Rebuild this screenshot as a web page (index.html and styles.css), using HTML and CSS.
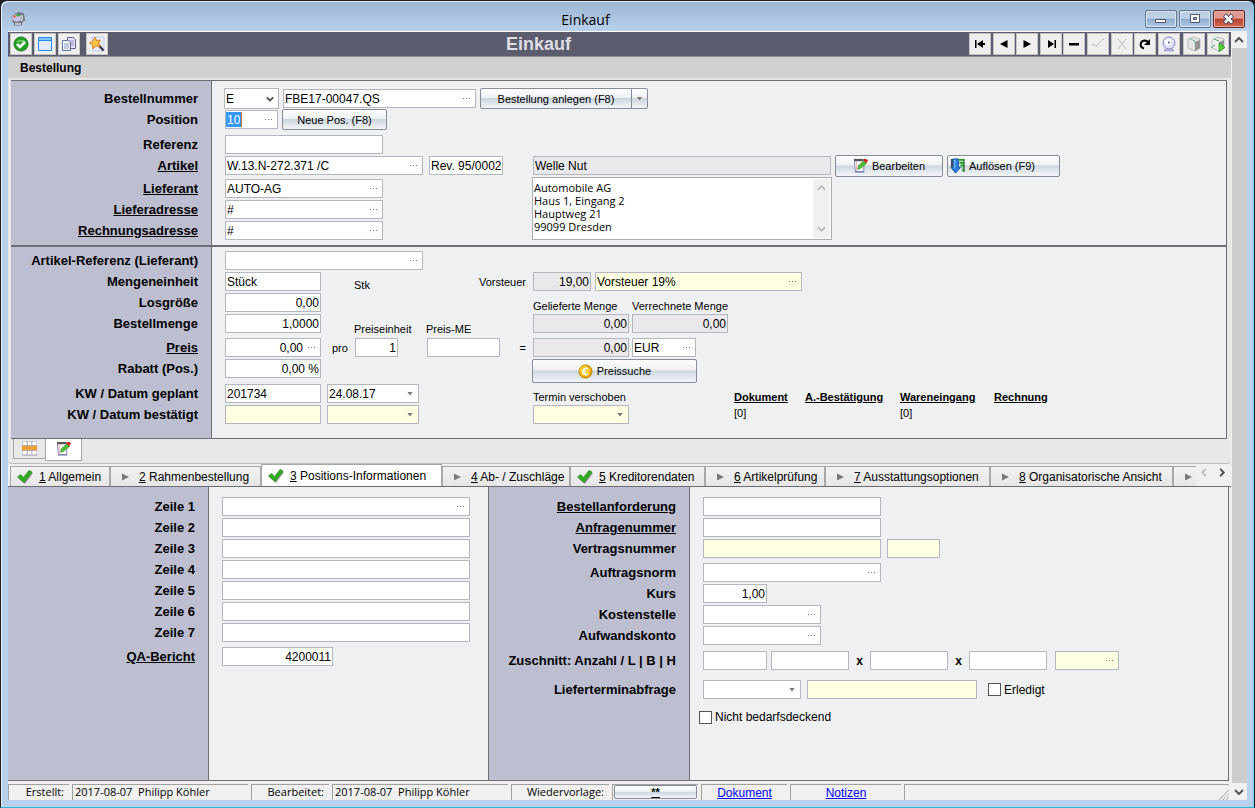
FILE: index.html
```html
<!DOCTYPE html>
<html lang="de">
<head>
<meta charset="UTF-8">
<meta name="viewport" content="width=device-width, initial-scale=1.0">
<title>Einkauf</title>
<link rel="stylesheet" href="styles.css">
</head>
<body>

<svg class="sprite" aria-hidden="true">
  <symbol id="i-check" viewBox="0 0 16 14">
    <path d="M1 7.500 4 5l3 3 5.500-7.500L15.500 2 7.500 13z" fill="#999" transform="translate(.5 1)"/>
    <path d="M.5 7 3.500 4.500l3 3L12 .5l3 1.500L7 12.500z" fill="#2fae22" stroke="#1d8a1d" stroke-width=".7"/>
  </symbol>
  <symbol id="i-play" viewBox="0 0 16 14">
    <path d="M5 3.500v7l7-3.500z" fill="#7b7b7b"/>
  </symbol>
  <symbol id="i-edit" viewBox="0 0 16 16">
    <path d="M1.500 2.500h10v12h-9z" fill="#fff" stroke="#777fa5"/>
    <path d="M1 1h10v2.500H1z" fill="#555"/>
    <path d="M4 4v10" stroke="#f0a0a0"/>
    <path d="M2 15h10" stroke="#7478b4"/>
    <path d="m5 12 1-4 6-5 2.500 2.500L8 11z" fill="#4cc332" stroke="#257a1c" stroke-width=".7"/>
    <path d="M11 1h3l2 1.500-2 3L11.500 3z" fill="#d3221c"/>
  </symbol>
  <symbol id="i-up" viewBox="0 0 10 6">
    <path d="m1 5 4-4 4 4" fill="none" stroke="currentColor" stroke-width="2"/>
  </symbol>
  <symbol id="i-down" viewBox="0 0 10 6">
    <path d="m1 1 4 4 4-4" fill="none" stroke="currentColor" stroke-width="2"/>
  </symbol>
</svg>

<div class="window">
  <header class="titlebar">
    <svg class="app-icon" viewBox="0 0 16 16">
      <path d="M5 2.500 9 1l5 1.500 1 7-3 2v3H4v-2L2 10z" fill="#70747c"/>
      <path d="m2 5 4-2 5 1v6l-5 1-4-2z" fill="#c9bfe6" stroke="#8a87a0" stroke-width=".6"/>
      <path d="M5 4.500 8 3l3 1.500-3 1z" fill="#35b23c"/>
      <path d="m3 5 2-1 1 2-2 1z" fill="#e46a4a"/>
      <path d="M5 13h6M12 4v6" stroke="#d9dbe0" stroke-width="1.500"/>
    </svg>
    <h1>Einkauf</h1>
    <div class="window-controls">
      <button aria-label="Minimieren"><svg viewBox="1 1 30 16"><path d="M10.500 9.500h10v3h-10z" fill="#fff" stroke="#4e5668"/></svg></button>
      <button aria-label="Maximieren"><svg viewBox="1 1 30 16"><path d="M11.500 4.500h9v8h-9z" fill="#fff" stroke="#4e5668"/><path d="M14.500 7.500h3v2h-3z" fill="#9bb8d8" stroke="#4e5668"/></svg></button>
      <button class="close" aria-label="Schließen"><svg viewBox="1 1 30 16"><path d="m11.500 5 8 8m0-8-8 8" stroke="#454a63" stroke-width="4.500"/><path d="m12 5.500 7 7m0-7-7 7" stroke="#fff" stroke-width="2.500"/></svg></button>
    </div>
  </header>

  <div class="frame">
    <main class="content">
      <div class="toolbar">
        <div class="tools">
          <button aria-label="Speichern"><svg viewBox="0 0 16 16"><circle cx="8" cy="8" r="7" fill="#23a127" stroke="#16781c"/><path d="M3 6a5.500 4 0 0 1 10 0" fill="#6fcb63"/><path d="m4 8 3 3 5-5" fill="none" stroke="#fff" stroke-width="2.500"/></svg></button>
          <button aria-label="Fenster"><svg viewBox="0 0 16 16"><path d="M1.500 1.500h13v13h-13z" fill="#e2e9fc" stroke="#1c8df0"/><path d="M2 2h12v2H2z" fill="#83c5f7"/><path d="M1 4.500h14" stroke="#1c8df0"/></svg></button>
          <button aria-label="Kopieren"><svg viewBox="0 0 16 16"><path d="M6.500 1.500h6l2 2v9h-8z" fill="#e7e2f7" stroke="#655a9c"/><path d="M8 5h5M8 7h5M8 9h5" stroke="#9a8fc8"/><path d="M1.500 4.500h6l2 2v8h-8z" fill="#f3f6fd" stroke="#5f75a5"/><path d="M3 8h5M3 10h5M3 12h5" stroke="#8ca2cc"/></svg></button>
          <button class="apart" aria-label="Assistent"><svg viewBox="0 0 16 16"><path d="M3 1h12v14H4z" fill="#e6edfb" stroke="#a9b8dd" stroke-width=".6"/><path d="m8.500 8 6 6.500" stroke="#3c3c4c" stroke-width="2.500"/><path d="m6 1 1.500 3.500 4-.5-2 3.500 1.500 3.500-4-1L4 13l-.5-4L.5 7l3.500-2z" fill="#ffc345" stroke="#d9771b" stroke-width=".9"/></svg></button>
        </div>
        <h2>Einkauf</h2>
        <div class="tools record-tools">
          <button aria-label="Erster"><svg viewBox="0 0 16 16"><path d="M3 4h1.500v8H3zM11 4v8L5 8zM11 7h2v2h-2z"/></svg></button>
          <button aria-label="Zurück"><svg viewBox="0 0 16 16"><path d="M11.500 4v8L4 8z"/></svg></button>
          <button aria-label="Weiter"><svg viewBox="0 0 16 16"><path d="M4.500 4v8L12 8z"/></svg></button>
          <button aria-label="Letzter"><svg viewBox="0 0 16 16"><path d="M11.500 4H13v8h-1.500zM5 4v8l6-4z"/></svg></button>
          <button aria-label="Löschen"><svg viewBox="0 0 16 16"><path d="M3 7h10v2.500H3z"/></svg></button>
          <button aria-label="Übernehmen" disabled><svg viewBox="0 0 16 16"><path d="m2 9 2-1 2 3 6-7 2-1" fill="none" stroke="#aaa" stroke-dasharray="2 1"/></svg></button>
          <button aria-label="Verwerfen" disabled><svg viewBox="0 0 16 16"><path d="m4 3 8 10m0-10L4 13" fill="none" stroke="#aaa" stroke-dasharray="2 1"/></svg></button>
          <button aria-label="Aktualisieren"><svg viewBox="0 0 16 16"><path d="M7 12.500C2 11 3 5 7.500 4.500c2 0 3 .5 3.500 2" fill="none" stroke="#000" stroke-width="2"/><path d="M13 3v6H7z"/></svg></button>
          <button aria-label="Suchen"><svg viewBox="0 0 16 16"><path d="m4 13 7-1 2 3H3z" fill="#b8b8e6" stroke="#8d8dc4" stroke-width=".6"/><circle cx="8" cy="7" r="6" fill="#dedffa" stroke="#8a8acb"/><circle cx="7" cy="6" r="3.500" fill="#f9faff"/><circle cx="8" cy="6.500" r="1" fill="#54549a"/></svg></button>
          <button class="apart" aria-label="Objekt"><svg viewBox="0 0 16 16"><path d="m2 3 5-2 7 2v9l-5 3-7-3z" fill="#e5e5e5" stroke="#999" stroke-width=".6"/><path d="m9 6 5-2v8l-5 3z" fill="#929292"/><path d="m4 3 5 2v3" fill="none" stroke="#70b5ac"/></svg></button>
          <button aria-label="Ausführen"><svg viewBox="0 0 16 16"><path d="m2 4 5-3 7 2v9l-5 3-7-3z" fill="#eee" stroke="#999" stroke-width=".6"/><path d="m9 6 5-2v8l-5 3z" fill="#929292"/><path d="m1 12 4-3M4 3l5 2" fill="none" stroke="#48a46c"/><path d="M9 7v9l6-4.500z" fill="#4fd22f" stroke="#298c1e" stroke-width=".7"/></svg></button>
        </div>
      </div>

      <section class="order">
        <h3>Bestellung</h3>

        <div class="panel form form-head">
          <label class="name" for="bestellnummer">Bestellnummer</label>
          <div class="fields wide">
            <span class="combo w-55"><select aria-label="Bestellart"><option>E</option></select><svg><use href="#i-down"/></svg></span>
            <span class="field w-193"><input id="bestellnummer" value="FBE17-00047.QS"><button class="more" aria-label="Auswählen"></button></span>
            <span class="split"><button class="btn">Bestellung anlegen (F8)</button><button class="btn drop" aria-label="Weitere Aktionen"></button></span>
          </div>

          <label class="name" for="position">Position</label>
          <div class="fields wide">
            <span class="field w-53"><span class="selected"><input id="position" value="10"></span><button class="more" aria-label="Auswählen"></button></span>
            <button class="btn w-105">Neue Pos. (F8)</button>
          </div>

          <label class="name" for="referenz">Referenz</label>
          <div class="fields wide"><span class="field w-158"><input id="referenz"></span></div>

          <label class="name link" for="artikel">Artikel</label>
          <div class="fields roomy">
            <span class="field w-198"><input id="artikel" value="W.13.N-272.371 /C"><button class="more" aria-label="Auswählen"></button></span>
            <span class="field w-74"><input aria-label="Revision" value="Rev. 95/0002"></span>
          </div>
          <div class="fields">
            <span class="field readonly w-298"><input aria-label="Bezeichnung" value="Welle Nut" readonly></span>
            <button class="btn tall w-108"><svg class="icon"><use href="#i-edit"/></svg>Bearbeiten</button>
            <button class="btn tall start w-113"><svg class="icon" viewBox="0 0 16 16"><path d="M3 1h6v9h2l-5 6-5-6h2z" fill="#2d83e5" stroke="#0f4c9c"/><path d="M5 2v9" stroke="#8cc4fb"/><path d="M2 1v9" stroke="#39465f" stroke-width="2"/><path d="M9 1h6v2H9zM10 4h5v2h-5zM11 7h4v2h-4zM12 10h3v1h-3zM13 12h2v2h-2z" fill="#1b9e28"/><path d="M15 1v14" stroke="#143d17"/></svg>Auflösen (F9)</button>
          </div>

          <label class="name link" for="lieferant">Lieferant</label>
          <div class="fields"><span class="field w-158"><input id="lieferant" value="AUTO-AG"><button class="more" aria-label="Auswählen"></button></span></div>
          <div class="address">
            <textarea aria-label="Anschrift" readonly>Automobile AG
Haus 1, Eingang 2
Hauptweg 21
99099 Dresden</textarea>
            <div class="address-scroll"><svg><use href="#i-up"/></svg><svg><use href="#i-down"/></svg></div>
          </div>

          <label class="name link" for="lieferadresse">Lieferadresse</label>
          <div class="fields"><span class="field w-158"><input id="lieferadresse" value="#"><button class="more" aria-label="Auswählen"></button></span></div>

          <label class="name link" for="rechnungsadresse">Rechnungsadresse</label>
          <div class="fields"><span class="field w-158"><input id="rechnungsadresse" value="#"><button class="more" aria-label="Auswählen"></button></span></div>
        </div>

        <div class="panel form form-item">
          <label class="name" for="artikelreferenz">Artikel-Referenz (Lieferant)</label>
          <div class="fields wide"><span class="field w-198"><input id="artikelreferenz"><button class="more" aria-label="Auswählen"></button></span></div>

          <label class="name" for="mengeneinheit">Mengeneinheit</label>
          <div class="fields price">
            <span class="field w-96"><input id="mengeneinheit" value="Stück"></span>
            <span class="from-unit unit">Stk</span>
            <label class="tail" for="vorsteuer">Vorsteuer</label>
          </div>
          <div class="fields">
            <span class="field readonly num w-58"><input id="vorsteuer" value="19,00" readonly></span>
            <span class="field optional w-207"><input aria-label="Steuerart" value="Vorsteuer 19%"><button class="more" aria-label="Auswählen"></button></span>
          </div>

          <label class="name" for="losgroesse">Losgröße</label>
          <div class="fields"><span class="field num w-96"><input id="losgroesse" value="0,00"></span></div>
          <div class="fields amounts heads">
            <label class="w-96" for="geliefert">Gelieferte Menge</label>
            <label class="w-96" for="verrechnet">Verrechnete Menge</label>
          </div>

          <label class="name" for="bestellmenge">Bestellmenge</label>
          <div class="fields price">
            <span class="field num w-96"><input id="bestellmenge" value="1,0000"></span>
            <label class="from-unit caption" for="preiseinheit">Preiseinheit</label>
            <label class="caption" for="preisme">Preis-ME</label>
          </div>
          <div class="fields amounts">
            <span class="field readonly num w-96"><input id="geliefert" value="0,00" readonly></span>
            <span class="field readonly num w-96"><input id="verrechnet" value="0,00" readonly></span>
          </div>

          <label class="name link" for="preis">Preis</label>
          <div class="fields price">
            <span class="field num w-96"><input id="preis" value="0,00"><button class="more" aria-label="Auswählen"></button></span>
            <span class="per">pro</span>
            <span class="field num w-43"><input id="preiseinheit" value="1"></span>
            <span class="field w-73"><input id="preisme"></span>
            <span class="tail">=</span>
          </div>
          <div class="fields amounts">
            <span class="field readonly num w-96"><input aria-label="Preis je Einheit" value="0,00" readonly></span>
            <span class="field w-64"><input aria-label="Währung" value="EUR"><button class="more" aria-label="Auswählen"></button></span>
          </div>

          <label class="name" for="rabatt">Rabatt (Pos.)</label>
          <div class="fields"><span class="field num w-96"><input id="rabatt" value="0,00 %"></span></div>
          <button class="btn search"><svg class="icon" viewBox="0 0 16 16"><circle cx="8" cy="8" r="7" fill="#f0ad10" stroke="#b98208"/><circle cx="7" cy="7" r="5.500" fill="#ffc92b"/><path d="M11 5.500C8 3.500 5.500 5 5.500 8S8 12.500 11 10.500M4.500 7h4M4.500 9h4" fill="none" stroke="#fff" stroke-width="1.500"/></svg>Preissuche</button>

          <label class="name" for="kwgeplant">KW / Datum geplant</label>
          <div class="fields roomy">
            <span class="field w-96"><input id="kwgeplant" value="201734"></span>
            <span class="pick w-92"><select aria-label="Datum geplant"><option>24.08.17</option></select></span>
          </div>
          <div class="fields docs heads">
            <label for="verschoben">Termin verschoben</label>
            <a href="#dokument">Dokument</a>
            <a href="#bestaetigung">A.-Bestätigung</a>
            <a href="#wareneingang">Wareneingang</a>
            <a href="#rechnung">Rechnung</a>
          </div>

          <label class="name" for="kwbestaetigt">KW / Datum bestätigt</label>
          <div class="fields roomy">
            <span class="field optional w-96"><input id="kwbestaetigt"></span>
            <span class="pick optional w-92"><select aria-label="Datum bestätigt"><option></option></select></span>
          </div>
          <div class="fields docs">
            <span class="pick optional w-96"><select id="verschoben"><option></option></select></span>
            <span class="count">[0]</span><span></span><span class="count">[0]</span>
          </div>
        </div>

        <div class="view-tabs">
          <button aria-label="Tabelle"><svg class="icon" viewBox="0 0 16 16"><path d="M0 0h16v15H0z" fill="#fff" stroke="#9a9ab0"/><path d="M0 5h16v5H0z" fill="#ff9d1c"/><path d="M5.500 0v15M10.500 0v15M0 5h16M0 10h16" stroke="#a9a4a8"/></svg></button>
          <button class="active" aria-label="Formular"><svg class="icon"><use href="#i-edit"/></svg></button>
        </div>
      </section>

      <nav class="tabs">
        <button class="w-100"><svg><use href="#i-check"/></svg><span><u>1</u> Allgemein</span></button>
        <button class="w-151"><svg><use href="#i-play"/></svg><span><u>2</u> Rahmenbestellung</span></button>
        <button class="w-181 active"><svg><use href="#i-check"/></svg><span><u>3</u> Positions-Informationen</span></button>
        <button class="w-128"><svg><use href="#i-play"/></svg><span><u>4</u> Ab- / Zuschläge</span></button>
        <button class="w-135"><svg><use href="#i-check"/></svg><span><u>5</u> Kreditorendaten</span></button>
        <button class="w-120"><svg><use href="#i-play"/></svg><span><u>6</u> Artikelprüfung</span></button>
        <button class="w-165"><svg><use href="#i-play"/></svg><span><u>7</u> Ausstattungsoptionen</span></button>
        <button class="w-183"><svg><use href="#i-play"/></svg><span><u>8</u> Organisatorische Ansicht</span></button>
        <button class="rest" aria-label="Weiterer Reiter"><svg><use href="#i-play"/></svg></button>
        <div class="tab-nav">
          <button aria-label="Reiter zurück" disabled><svg viewBox="0 0 6 10"><path d="M5 1 1 5l4 4" fill="none" stroke="#bbb" stroke-width="2"/></svg></button>
          <button aria-label="Reiter weiter"><svg viewBox="0 0 6 10"><path d="m1 1 4 4-4 4" fill="none" stroke="#444" stroke-width="2"/></svg></button>
        </div>
      </nav>

      <section class="details">
        <div class="form form-lines">
          <label class="name" for="zeile1">Zeile 1</label>
          <div class="fields"><span class="field w-248"><input id="zeile1"><button class="more" aria-label="Auswählen"></button></span></div>
          <label class="name" for="zeile2">Zeile 2</label>
          <div class="fields"><span class="field w-248"><input id="zeile2"></span></div>
          <label class="name" for="zeile3">Zeile 3</label>
          <div class="fields"><span class="field w-248"><input id="zeile3"></span></div>
          <label class="name" for="zeile4">Zeile 4</label>
          <div class="fields"><span class="field w-248"><input id="zeile4"></span></div>
          <label class="name" for="zeile5">Zeile 5</label>
          <div class="fields"><span class="field w-248"><input id="zeile5"></span></div>
          <label class="name" for="zeile6">Zeile 6</label>
          <div class="fields"><span class="field w-248"><input id="zeile6"></span></div>
          <label class="name" for="zeile7">Zeile 7</label>
          <div class="fields"><span class="field w-248"><input id="zeile7"></span></div>
          <label class="name link" for="qabericht">QA-Bericht</label>
          <div class="fields"><span class="field num w-111"><input id="qabericht" value="4200011"></span></div>
        </div>

        <div class="form form-refs">
          <label class="name link" for="anforderung">Bestellanforderung</label>
          <div class="fields"><span class="field w-178"><input id="anforderung"></span></div>
          <label class="name link" for="anfrage">Anfragenummer</label>
          <div class="fields"><span class="field w-178"><input id="anfrage"></span></div>
          <label class="name" for="vertrag">Vertragsnummer</label>
          <div class="fields roomy">
            <span class="field optional w-178"><input id="vertrag"></span>
            <span class="field optional w-53"><input aria-label="Vertragsposition"></span>
          </div>
          <label class="name" for="auftragsnorm">Auftragsnorm</label>
          <div class="fields"><span class="field w-178"><input id="auftragsnorm"><button class="more" aria-label="Auswählen"></button></span></div>
          <label class="name" for="kurs">Kurs</label>
          <div class="fields"><span class="field num w-64"><input id="kurs" value="1,00"></span></div>
          <label class="name" for="kostenstelle">Kostenstelle</label>
          <div class="fields"><span class="field w-118"><input id="kostenstelle"><button class="more" aria-label="Auswählen"></button></span></div>
          <label class="name" for="aufwandskonto">Aufwandskonto</label>
          <div class="fields"><span class="field w-118"><input id="aufwandskonto"><button class="more" aria-label="Auswählen"></button></span></div>
          <label class="name" for="zuschnitt">Zuschnitt: Anzahl / L | B | H</label>
          <div class="fields">
            <span class="field w-64"><input id="zuschnitt"></span>
            <span class="field w-78"><input aria-label="Länge"></span>
            <b class="times">x</b>
            <span class="field w-78"><input aria-label="Breite"></span>
            <b class="times">x</b>
            <span class="field w-78"><input aria-label="Höhe"></span>
            <span class="field optional cut-unit w-64"><input aria-label="Einheit"><button class="more" aria-label="Auswählen"></button></span>
          </div>
          <label class="name" for="abfrage">Lieferterminabfrage</label>
          <div class="fields roomy">
            <span class="pick w-98"><select id="abfrage"><option></option></select></span>
            <span class="field optional w-170"><input aria-label="Abfragetext"></span>
            <label class="tick later"><input type="checkbox">Erledigt</label>
          </div>
          <label class="tick alone"><input type="checkbox">Nicht bedarfsdeckend</label>
        </div>
      </section>

      <footer class="status">
        <div class="right w-61">Erstellt:</div>
        <div class="w-176">2017-08-07&nbsp; Philipp Köhler</div>
        <div class="right w-78">Bearbeitet:</div>
        <div class="w-176">2017-08-07&nbsp; Philipp Köhler</div>
        <div class="right w-98">Wiedervorlage:</div>
        <div class="w-86 holder"><button class="btn"><u>**</u></button></div>
        <div class="w-86 center"><a href="#dokument">Dokument</a></div>
        <div class="w-111 center"><a href="#notizen">Notizen</a></div>
        <div class="last"><svg viewBox="0 0 12 12"><path d="M1 12 12 1M5 12l7-7M9 12l3-3" stroke="#999"/></svg></div>
      </footer>
    </main>

    <div class="scrollbar">
      <button aria-label="Nach oben"><svg><use href="#i-up"/></svg></button>
      <div class="thumb"></div>
      <button aria-label="Nach unten"><svg><use href="#i-down"/></svg></button>
    </div>
  </div>
</div>

</body>
</html>
```

FILE: styles.css
```css
* {
  box-sizing: border-box;
}

body {
  margin: 0;
  background-color: #201c26;
  font-family: "Liberation Sans", Arial, sans-serif;
  font-size: 11px;
  color: #000;
}

h1, h2, h3 {
  margin: 0;
}

button, input, select, textarea {
  margin: 0;
  padding: 0;
  border: none;
  background: none;
  font: inherit;
  color: inherit;
}

svg {
  display: block;
}

.sprite {
  display: none;
}

.icon {
  width: 15px;
  height: 15px;
}

/* Window frame */
.window {
  display: flex;
  flex-direction: column;
  min-height: 100vh;
  border: 1px solid #201c26;
  border-bottom-color: #20b9d4;
  border-radius: 7px 7px 0 0;
  background: linear-gradient(#9cb6d3, #b9d1ea 31px, #b9d1ea);
  box-shadow: inset 1px 1px 0 #e8f2fb, inset -1px 0 0 #6fd3ea;
}

.titlebar {
  display: flex;
  align-items: center;
  height: 30px;
  padding: 6px 9px 0;
}

.titlebar h1 {
  flex: 1;
  text-align: center;
  font-family: "Open Sans", sans-serif;
  font-size: 14px;
  font-weight: normal;
}

.app-icon {
  width: 16px;
  height: 16px;
}

.window-controls {
  display: flex;
  gap: 2px;
}

.window-controls button {
  width: 32px;
  height: 18px;
  border: 1px solid #66768c;
  border-radius: 2px;
  background: linear-gradient(#bed0e4 45%, #8eacce 50%, #b2cbe4);
  box-shadow: inset 0 0 0 1px #d5e3f1;
}

.window-controls .close {
  border-color: #6c2222;
  background: linear-gradient(#dd9a8d 45%, #b9402c 50%, #cf6a52);
  box-shadow: inset 0 0 0 1px #e5ada0;
}

.window-controls svg {
  width: 30px;
  height: 16px;
}

.frame {
  flex: 1;
  display: flex;
  padding: 0 7px 7px;
}

.content {
  flex: 1;
  min-width: 0;
  display: flex;
  flex-direction: column;
  background-color: #f0f0f0;
  border-top: 1px solid #fff;
}

.scrollbar {
  display: flex;
  flex-direction: column;
  width: 16px;
  background-color: #f0f0f0;
  color: #555;
}

.scrollbar button {
  height: 17px;
  padding: 0 3px;
}

.scrollbar svg {
  width: 10px;
  height: 6px;
}

.thumb {
  flex: 1;
  background-color: #cdcdcd;
  border-left: 1px solid #f0f0f0;
}

/* Toolbar */
.toolbar {
  display: flex;
  align-items: center;
  height: 25px;
  padding: 0 2px;
  background-color: #5b5c6e;
  border-bottom: 1px solid #8d8d96;
}

.toolbar h2 {
  flex: 1;
  text-align: center;
  font-size: 18px;
  line-height: 22px;
  color: #dedee4;
}

.tools {
  display: flex;
  gap: 2px;
}

.tools button {
  width: 22px;
  height: 22px;
  padding: 2px;
  background-color: #efefef;
  border: 1px solid #c5c5c5;
}

.tools .apart {
  margin-left: 4px;
}

.record-tools {
  width: 260px;
  gap: 0;
  justify-content: space-between;
}

.record-tools .apart {
  margin-left: 2px;
}

.tools svg {
  width: 16px;
  height: 16px;
}

/* Form panels */
.order {
  padding: 0 4px 2px 3px;
  background-color: #e8e8e8;
  border-bottom: 1px solid #bdbdbd;
  border-radius: 0 0 4px 4px;
}

.order h3 {
  margin: 0 -4px 2px -3px;
  padding-left: 12px;
  height: 21px;
  font-size: 12px;
  line-height: 22px;
  background-color: #d0d0d0;
}

.panel {
  border-top: 1px solid #6d6d74;
  border-right: 1px solid #6d6d74;
}

.form {
  display: grid;
  grid-template-columns: 200px 322px 1fr;
  align-items: end;
  background: linear-gradient(to right, #bdbfd0 200px, #6d6d74 200px, #6d6d74 201px, #eff0f2 201px);
}

.form-head {
  grid-template-rows: 27px 21px 25px 21px 23px 21px 21px;
  padding-bottom: 5px;
}

.form-item {
  grid-template-rows: 23px 21px 21px 21px 24px 21px 25px 21px;
  padding-bottom: 14px;
  border-top-width: 2px;
  border-bottom: 1px solid #6d6d74;
}

.name {
  grid-column: 1;
  padding-right: 13px;
  text-align: right;
  font-size: 13px;
  font-weight: bold;
  line-height: 19px;
}

.link {
  text-decoration: underline;
}

.fields {
  display: flex;
  align-items: center;
  gap: 4px;
  height: 19px;
  padding-left: 14px;
  white-space: nowrap;
}

.name + .fields + .fields {
  padding-left: 0;
}

.wide {
  grid-column: 2 / -1;
}

.roomy {
  gap: 6px;
}

.amounts {
  gap: 3px;
}

.heads {
  align-items: flex-end;
}

.field, .pick, .combo {
  flex: none;
  display: flex;
  align-items: center;
  height: 19px;
  border: 1px solid #b4b7bf;
  background-color: #fff;
  font-size: 12px;
}

.field input {
  flex: 1;
  width: 100%;
  min-width: 0;
  height: 17px;
  padding: 0 1px;
}

.num input {
  text-align: right;
}

.readonly {
  background-color: #e9e9eb;
}

.optional {
  background-color: #ffffe1;
}

.selected {
  flex: 1;
}

.selected input {
  width: 16px;
  height: 15px;
  background-color: #3399ff;
  border-right: 1px solid #d07020;
  color: #fff;
}

.more {
  flex: none;
  width: 16px;
  height: 17px;
  padding: 0 4px 0 4px;
}

.more::before {
  content: "";
  display: block;
  width: 7px;
  height: 1px;
  background: repeating-linear-gradient(to right, #777 0 1px, transparent 1px 3px);
}

.pick, .combo {
  display: grid;
  grid-template-columns: 1fr;
}

.pick select, .combo select {
  grid-area: 1 / 1;
  width: 100%;
  height: 17px;
  padding: 0 1px;
  appearance: none;
}

.pick::after {
  content: "";
  grid-area: 1 / 1;
  justify-self: end;
  width: 6px;
  height: 4px;
  margin-right: 5px;
  background-color: #777;
  clip-path: polygon(0 0, 100% 0, 50% 100%);
  pointer-events: none;
}

.combo {
  height: 21px;
  margin-left: -1px;
}

.combo svg {
  grid-area: 1 / 1;
  justify-self: end;
  width: 8px;
  height: 6px;
  margin-right: 4px;
  color: #444;
  pointer-events: none;
}

.btn {
  display: inline-flex;
  align-items: center;
  justify-content: center;
  gap: 4px;
  height: 21px;
  border: 1px solid #878c99;
  border-radius: 2px;
  background: linear-gradient(#fdfdfe, #eef1f4 45%, #ccd6df 50%, #f3f6f8);
  white-space: nowrap;
}

.btn.tall {
  height: 22px;
}

.btn.start {
  justify-content: flex-start;
  padding-left: 2px;
}

.split {
  display: flex;
}

.split .btn {
  width: 152px;
  border-radius: 2px 0 0 2px;
}

.split .drop {
  width: 17px;
  margin-left: -1px;
  border-radius: 0 2px 2px 0;
}

.drop::before {
  content: "";
  width: 6px;
  height: 4px;
  background-color: #777;
  clip-path: polygon(0 0, 100% 0, 50% 100%);
}

.address {
  grid-row: 5 / span 3;
  grid-column: 3;
  display: flex;
  width: 300px;
  height: 63px;
  margin-left: -1px;
  border: 1px solid #a9adb3;
  background-color: #fff;
}

.address textarea {
  flex: 1;
  padding: 3px 1px;
  resize: none;
  overflow: hidden;
  font-family: "Open Sans", Tahoma, sans-serif;
  line-height: 13px;
}

.address-scroll {
  display: flex;
  flex-direction: column;
  justify-content: space-between;
  width: 17px;
  margin: 1px;
  padding: 6px 4px;
  background-color: #f0f0f0;
  color: #bbb;
}

.address-scroll svg {
  width: 9px;
  height: 6px;
}

/* Price rows */
.price {
  gap: 0;
  padding-right: 7px;
}

.from-unit {
  width: 72px;
  margin-left: 33px;
}

.unit {
  align-self: flex-end;
}

.caption {
  align-self: flex-end;
  line-height: 8px;
}

.per {
  width: 23px;
  margin-left: 11px;
}

.price .w-73 {
  margin-left: 29px;
}

.tail {
  margin-left: auto;
}

.search {
  align-self: start;
  width: 165px;
  height: 24px;
  margin: 2px 0 0 -1px;
}

.docs {
  display: grid;
  grid-template-columns: 201px 71px 95px 94px auto;
  gap: 0;
  justify-content: start;
}

.docs a {
  color: inherit;
  font-weight: bold;
}

.count {
  align-self: start;
  padding-top: 2px;
}

/* Tabs */
.view-tabs {
  display: flex;
  align-items: flex-start;
  padding-left: 2px;
}

.view-tabs button {
  display: flex;
  justify-content: center;
  width: 33px;
  height: 20px;
  padding-top: 2px;
  border: 1px solid #a8a8a8;
  border-top: none;
}

.view-tabs .active {
  width: 37px;
  height: 22px;
  margin-left: -1px;
  background-color: #fff;
}

.tabs {
  display: flex;
  align-items: flex-end;
  height: 23px;
  padding-left: 2px;
  font-size: 12px;
  border-bottom: 1px solid #6d6d74;
}

.tabs > button {
  flex: none;
  display: flex;
  align-items: center;
  gap: 6px;
  height: 20px;
  padding-left: 6px;
  border: 1px solid #a8a8a8;
  border-bottom: none;
  background: linear-gradient(#f2f2f2, #e6e6e6);
  white-space: nowrap;
}

.tabs > .active {
  height: 22px;
  background: #fff;
}

.tabs > button > svg {
  width: 16px;
  height: 14px;
}

.tabs > .rest {
  width: 23px;
  border-right: none;
}

.tab-nav {
  flex: 1;
  display: flex;
  align-self: flex-start;
  justify-content: flex-end;
  gap: 12px;
  padding: 4px 6px 0 0;
}

.tab-nav svg {
  width: 6px;
  height: 9px;
}

/* Detail area */
.details {
  flex: 1;
  display: flex;
  margin-right: 2px;
  border-right: 1px solid #6d6d74;
  border-bottom: 1px solid #6d6d74;
}

.details .form {
  align-content: start;
}

.form-lines {
  width: 481px;
  grid-template-columns: 200px 1fr;
  grid-template-rows: 29px 21px 21px 21px 21px 21px 21px 24px;
  border-right: 1px solid #6d6d74;
}

.form-refs {
  flex: 1;
  grid-template-columns: 200px 1fr;
  grid-template-rows: 29px 21px 21px 24px 21px 21px 21px 25px 29px 25px;
}

.times {
  width: 13px;
  text-align: center;
  font-size: 12px;
}

.cut-unit {
  margin-left: 4px;
}

.tick {
  display: flex;
  align-items: center;
  gap: 3px;
  font-size: 12px;
}

.tick input {
  width: 13px;
  height: 13px;
  appearance: none;
  background-color: #fff;
  border: 1px solid #555;
}

.tick input:checked {
  background-color: #555;
}

.later {
  margin-left: 5px;
}

.alone {
  grid-column: 2;
  padding-left: 10px;
}

/* Status bar */
.status {
  display: flex;
  gap: 3px;
  height: 19px;
  padding-top: 3px;
  margin-right: 2px;
  font-family: "Open Sans", Tahoma, sans-serif;
}

.status div {
  padding: 0 2px;
  border-top: 1px solid #a0a0a0;
  border-left: 1px solid #a0a0a0;
  line-height: 14px;
  white-space: nowrap;
}

.status .right {
  padding-right: 5px;
  text-align: right;
}

.status .center {
  text-align: center;
  font-family: "Liberation Sans", Arial, sans-serif;
  font-size: 12px;
  line-height: 16px;
}

.status a {
  color: #00f;
}

.status .holder {
  padding: 0 1px;
}

.holder .btn {
  width: 100%;
  height: 14px;
  font-family: "Liberation Sans", Arial, sans-serif;
  font-weight: bold;
}

.status .last {
  flex: 1;
  display: flex;
  align-items: flex-end;
  justify-content: flex-end;
  padding: 0;
}

.last svg {
  width: 11px;
  height: 11px;
}

/* Widths */
.w-43 { width: 43px; }
.w-53 { width: 53px; }
.w-55 { width: 55px; }
.w-58 { width: 58px; }
.w-61 { width: 61px; }
.w-64 { width: 64px; }
.w-73 { width: 73px; }
.w-74 { width: 74px; }
.w-78 { width: 78px; }
.w-86 { width: 86px; }
.w-92 { width: 92px; }
.w-96 { width: 96px; }
.w-98 { width: 98px; }
.w-100 { width: 100px; }
.w-105 { width: 105px; }
.w-108 { width: 108px; }
.w-111 { width: 111px; }
.w-113 { width: 113px; }
.w-118 { width: 118px; }
.w-120 { width: 120px; }
.w-128 { width: 128px; }
.w-135 { width: 135px; }
.w-151 { width: 151px; }
.w-158 { width: 158px; }
.w-165 { width: 165px; }
.w-170 { width: 170px; }
.w-176 { width: 176px; }
.w-178 { width: 178px; }
.w-181 { width: 181px; }
.w-183 { width: 183px; }
.w-193 { width: 193px; }
.w-198 { width: 198px; }
.w-207 { width: 207px; }
.w-248 { width: 248px; }
.w-298 { width: 298px; }
```
